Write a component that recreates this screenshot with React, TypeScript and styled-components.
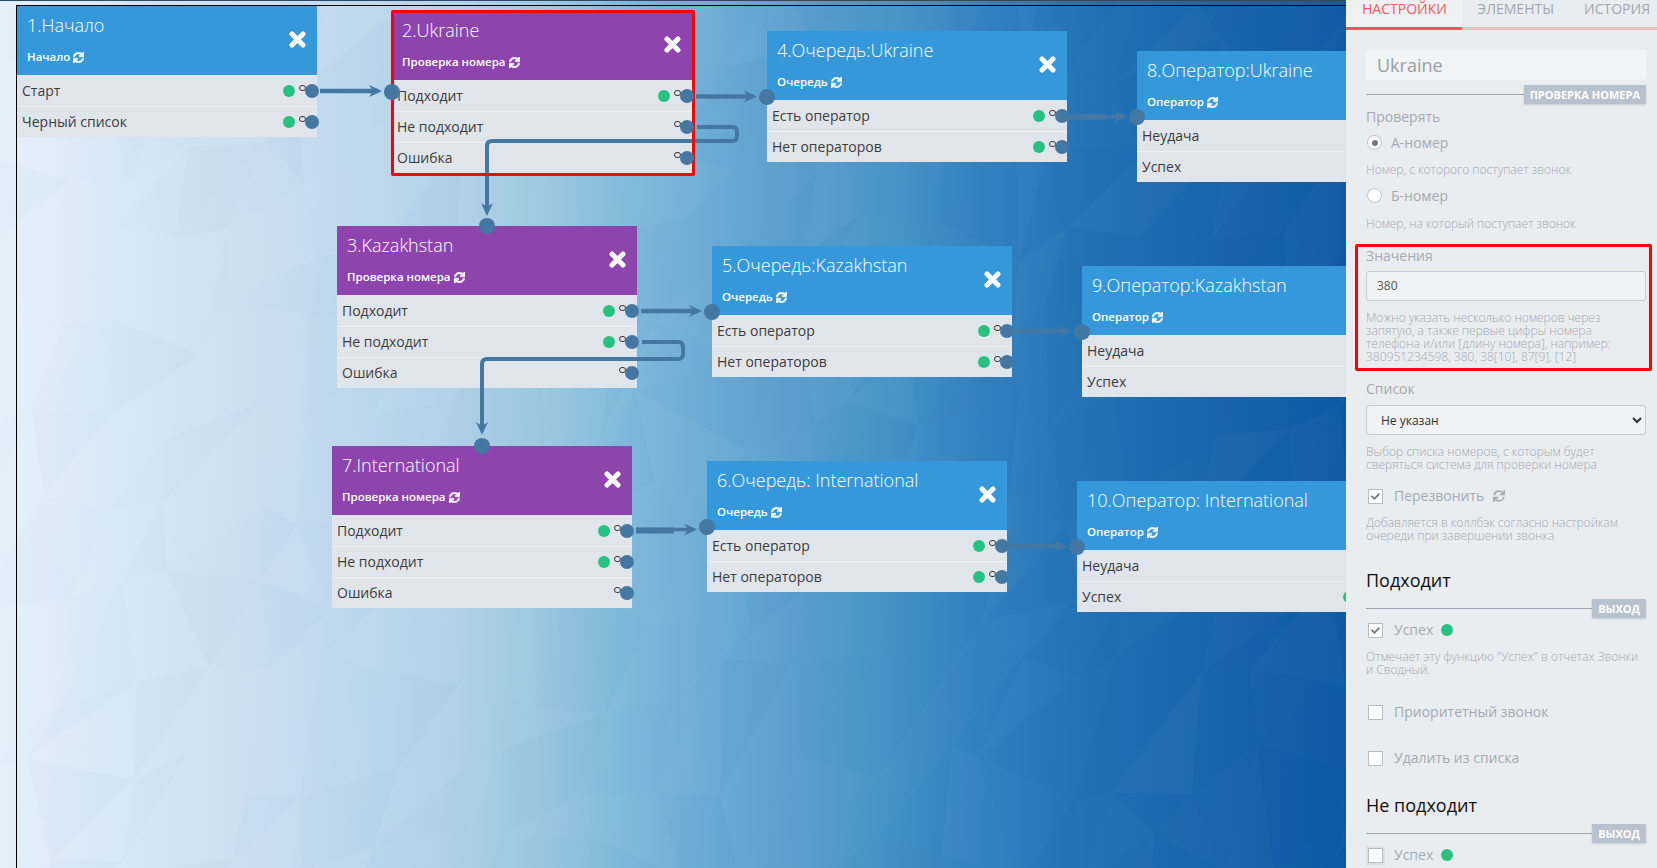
import React from "react";
import styled, { createGlobalStyle } from "styled-components";
import { FaCheck, FaSync } from "react-icons/fa";

const GlobalStyle = createGlobalStyle`
  html, body {
    margin: 0;
    padding: 0;
    height: 100%;
    overflow: hidden;
    font-family: "Open Sans", "Noto Sans", sans-serif;
  }
  * {
    box-sizing: border-box;
  }
`;

const Page = styled.div`
  display: flex;
  width: 1657px;
  height: 868px;
  overflow: hidden;
`;

const Canvas = styled.div`
  position: relative;
  flex: 1;
  overflow: hidden;
  background: linear-gradient(
    91deg,
    #e6f0fa 0,
    #d6e6f4 150px,
    #c6dcef 300px,
    #b4d3e9 450px,
    #9bc8e0 550px,
    #7fb8da 640px,
    #5a9fce 800px,
    #4593c8 900px,
    #3180bf 1000px,
    #2271b5 1100px,
    #1863ab 1250px,
    #0f5aa5 1346px
  );
`;

const Texture = styled.svg`
  position: absolute;
  inset: 0;
`;

const TopEdge = styled.div`
  position: absolute;
  inset: 0 0 auto 0;
  height: 1px;
  background: #2b4a68;
`;

const Frame = styled.div`
  position: absolute;
  left: 16px;
  top: 5px;
  right: 0;
  bottom: 0;
  border-left: 1px solid #000;
  border-top: 1px solid #000;
`;

const Node = styled.div<{ $left: number; $top: number }>`
  position: absolute;
  left: ${(p) => p.$left}px;
  top: ${(p) => p.$top}px;
  width: 300px;
`;

const Header = styled.div<{ $purple?: boolean }>`
  position: relative;
  height: 69px;
  padding: 7px 10px 0;
  color: #fff;
  background: ${(p) => (p.$purple ? "#8e44ad" : "#3498db")};
`;

const Title = styled.div`
  font-size: 18px;
  font-weight: 300;
  line-height: 25px;
  white-space: nowrap;
`;

const Sub = styled.div`
  display: flex;
  align-items: center;
  gap: 3px;
  margin-top: 11px;
  font-size: 11.5px;
  font-weight: 600;
  line-height: 16px;
`;

const SubIcon = styled(FaSync)`
  width: 11px;
  height: 11px;
  stroke: currentColor;
  stroke-width: 24px;
`;

const Close = styled.svg`
  position: absolute;
  right: 11px;
  top: 24.5px;
  width: 17px;
  height: 17px;
`;

const Row = styled.div`
  position: relative;
  display: flex;
  align-items: center;
  height: 31px;
  padding-left: 5px;
  font-size: 14px;
  color: #3c3c3c;
  background: #e0e5ec;
  & + & {
    box-shadow: inset 0 1px 0 #edf0f3;
  }
`;

const GreenDot = styled.span`
  position: absolute;
  left: 266px;
  top: 9.5px;
  width: 12px;
  height: 12px;
  border-radius: 50%;
  background: #26c281;
`;

const LinkRing = styled.span`
  position: absolute;
  left: 282.3px;
  top: 9.5px;
  width: 6.5px;
  height: 6.5px;
  border-radius: 50%;
  border: 1.5px solid #3b3433;
`;

const OutPort = styled.span`
  position: absolute;
  left: 288px;
  top: 8.5px;
  width: 14px;
  height: 14px;
  border-radius: 50%;
  background: #4478a3;
  z-index: 5;
`;

const InPort = styled.span<{ $x: number; $y: number }>`
  position: absolute;
  left: ${(p) => p.$x - 8}px;
  top: ${(p) => p.$y - 8}px;
  width: 16px;
  height: 16px;
  border-radius: 50%;
  background: #4478a3;
  z-index: 5;
`;

const Wires = styled.svg`
  position: absolute;
  inset: 0;
  z-index: 3;
  pointer-events: none;
`;

const RedMark = styled.div`
  position: absolute;
  left: 391px;
  top: 10px;
  width: 304px;
  height: 166px;
  border: 3px solid #f00;
  border-radius: 2px;
  z-index: 4;
`;

const Sidebar = styled.aside`
  flex: 0 0 311px;
  height: 868px;
  overflow: hidden;
  background: #e9edf0;
`;

const Tabs = styled.div`
  display: flex;
  height: 30px;
  white-space: nowrap;
  border-bottom: 3px solid #ecbfc1;
`;

const Tab = styled.div<{ $active?: boolean }>`
  flex: none;
  height: 30px;
  padding: ${(p) => (p.$active ? "0 15.5px 0 16px" : "0 15px")};
  font-size: 14px;
  line-height: 18px;
  color: ${(p) => (p.$active ? "#f05a65" : "#9ea7b1")};
  background: ${(p) => (p.$active ? "#eef0f1" : "transparent")};
  border-bottom: 3px solid ${(p) => (p.$active ? "#f4545f" : "transparent")};
`;

const Form = styled.div`
  padding: 0 11px 0 20px;
`;

const NameInput = styled.input`
  display: block;
  width: 100%;
  height: 30px;
  margin-top: 20px;
  padding: 0 11px;
  border: 0;
  border-radius: 3px;
  font: 18px "Open Sans", sans-serif;
  color: #9a9ea3;
  background: #f2f4f5;
`;

const Divider = styled.div<{ $mt: number }>`
  display: flex;
  align-items: center;
  height: 19px;
  margin-top: ${(p) => p.$mt}px;
  &::before {
    content: "";
    flex: 1;
    height: 1px;
    background: #9aa6b4;
  }
`;

const Badge = styled.span`
  padding: 0 6px;
  font-size: 11px;
  font-weight: 700;
  line-height: 19px;
  color: #fff;
  background: #b8c2ce;
  box-shadow: 0 1px 2px rgba(0, 0, 0, 0.15);
`;

const Label = styled.div<{ $mt: number }>`
  margin-top: ${(p) => p.$mt}px;
  font-size: 14px;
  line-height: 18px;
  color: #a4aab3;
`;

const Help = styled.div<{ $mt: number }>`
  margin-top: ${(p) => p.$mt}px;
  font-size: 12px;
  font-weight: 300;
  line-height: 13px;
  color: #a3a9b1;
`;

const OptionRow = styled.div<{ $mt: number }>`
  display: flex;
  align-items: center;
  height: 18px;
  margin-top: ${(p) => p.$mt}px;
  padding-left: 2px;
  font-size: 14px;
  color: #a4aab3;
`;

const Radio = styled.span<{ $on?: boolean }>`
  display: flex;
  align-items: center;
  justify-content: center;
  width: 13px;
  height: 13px;
  margin-right: 10px;
  border-radius: 50%;
  background: #fff;
  box-shadow: 0 0 0 1px #c4c7cb;
  &::after {
    content: "";
    width: 6px;
    height: 6px;
    border-radius: 50%;
    background: ${(p) => (p.$on ? "#777" : "transparent")};
  }
`;

const CheckBox = styled.span<{ $focus?: boolean }>`
  display: flex;
  flex: none;
  align-items: center;
  justify-content: center;
  width: 15px;
  height: 15px;
  margin: 2px 11px 0 0;
  color: #777;
  background: #fff;
  border: 1px solid #b9bdc2;
  box-shadow: ${(p) => (p.$focus ? "0 0 0 2px #dcdfe3" : "none")};
  svg {
    width: 9px;
    height: 9px;
  }
`;

const ReloadIcon = styled(FaSync)`
  width: 12px;
  height: 12px;
  margin-left: 9px;
  color: #a4aab3;
`;

const SuccessDot = styled.span`
  width: 12px;
  height: 12px;
  margin-left: 8px;
  border-radius: 50%;
  background: #26c281;
`;

const Heading = styled.div<{ $mt: number }>`
  margin-top: ${(p) => p.$mt}px;
  font-size: 18px;
  line-height: 24px;
  color: #111;
`;

const Highlight = styled.div`
  margin: 13.5px -6px 0 -11px;
  padding: 1px 3px 5.5px 8px;
  border: 3px solid #f00;
  border-radius: 2px;
`;

const FieldLabel = styled.div`
  font-size: 14px;
  line-height: 16px;
  color: #a4aab3;
`;

const ValueInput = styled.input`
  display: block;
  width: 100%;
  height: 30px;
  margin-top: 7px;
  padding: 0 10px;
  border: 1px solid #c5ccd6;
  border-radius: 3px;
  font: 12px "Open Sans", sans-serif;
  color: #555;
  background: #f0f2f4;
`;

const ListSelect = styled.select`
  display: block;
  width: 100%;
  height: 30px;
  margin-top: 7px;
  padding: 0 10px;
  border: 1px solid #c5ccd6;
  border-radius: 3px;
  font: 12px "Open Sans", sans-serif;
  color: #333;
  background: #f0f2f4;
`;

// low-poly backdrop: a jittered mesh of very faint triangles
const buildMesh = () => {
  let seed = 7;
  const rnd = () => {
    seed = (seed * 16807) % 2147483647;
    return seed / 2147483647;
  };
  const cols = 21;
  const rows = 11;
  const pts: [number, number][][] = [];
  for (let c = 0; c <= cols; c++) {
    pts[c] = [];
    for (let r = 0; r <= rows; r++) {
      pts[c][r] = [
        c * 68 - 20 + (rnd() - 0.5) * 50,
        r * 88 - 20 + (rnd() - 0.5) * 60,
      ];
    }
  }
  const tris: { d: string; fill: string; o: number }[] = [];
  const add = (a: number[], b: number[], d: number[]) => {
    tris.push({
      d: `${a.join(",")} ${b.join(",")} ${d.join(",")}`,
      fill: rnd() > 0.5 ? "#fff" : "#0a4f8f",
      o: 0.004 + rnd() * 0.018,
    });
  };
  for (let c = 0; c < cols; c++) {
    for (let r = 0; r < rows; r++) {
      add(pts[c][r], pts[c + 1][r], pts[c][r + 1]);
      add(pts[c + 1][r], pts[c + 1][r + 1], pts[c][r + 1]);
    }
  }
  return tris;
};

const mesh = buildMesh();

type RowData = { label: string; green?: boolean };
type NodeData = {
  left: number;
  top: number;
  title: string;
  sub: string;
  purple?: boolean;
  port?: [number, number];
  rows: RowData[];
};

const checkRows: RowData[] = [
  { label: "Подходит", green: true },
  { label: "Не подходит", green: true },
  { label: "Ошибка" },
];
const queueRows: RowData[] = [
  { label: "Есть оператор", green: true },
  { label: "Нет операторов", green: true },
];
const operatorRows: RowData[] = [
  { label: "Неудача" },
  { label: "Успех", green: true },
];

const nodes: NodeData[] = [
  {
    left: 17,
    top: 6,
    title: "1.Начало",
    sub: "Начало",
    rows: [
      { label: "Старт", green: true },
      { label: "Черный список", green: true },
    ],
  },
  {
    left: 392,
    top: 11,
    title: "2.Ukraine",
    sub: "Проверка номера",
    purple: true,
    port: [0, 81],
    rows: [
      { label: "Подходит", green: true },
      { label: "Не подходит" },
      { label: "Ошибка" },
    ],
  },
  {
    left: 337,
    top: 226,
    title: "3.Kazakhstan",
    sub: "Проверка номера",
    purple: true,
    port: [150, 0],
    rows: checkRows,
  },
  {
    left: 332,
    top: 446,
    title: "7.International",
    sub: "Проверка номера",
    purple: true,
    port: [150, 0],
    rows: checkRows,
  },
  { left: 767, top: 31, title: "4.Очередь:Ukraine", sub: "Очередь", port: [0, 66], rows: queueRows },
  { left: 712, top: 246, title: "5.Очередь:Kazakhstan", sub: "Очередь", port: [0, 66], rows: queueRows },
  { left: 707, top: 461, title: "6.Очередь: International", sub: "Очередь", port: [0, 66], rows: queueRows },
  { left: 1137, top: 51, title: "8.Оператор:Ukraine", sub: "Оператор", port: [0, 66], rows: operatorRows },
  { left: 1082, top: 266, title: "9.Оператор:Kazakhstan", sub: "Оператор", port: [0, 66], rows: operatorRows },
  { left: 1077, top: 481, title: "10.Оператор: International", sub: "Оператор", port: [0, 66], rows: operatorRows },
];

const WIRE = "#4478a3";

const Arrow = ({ x, y, down }: { x: number; y: number; down?: boolean }) => (
  <path
    fill={WIRE}
    d={
      down
        ? `M${x} ${y} L${x - 6} ${y - 13} L${x} ${y - 9} L${x + 6} ${y - 13} Z`
        : `M${x} ${y} L${x - 13} ${y - 6} L${x - 9} ${y} L${x - 13} ${y + 6} Z`
    }
  />
);

const straight: [number, number, number, number][] = [
  [320, 382, 91, 4.5],
  [696, 757, 96.5, 4.5],
  [641, 702, 311, 4.5],
  [636, 697, 529.5, 3.5],
  [636, 678, 530.5, 6],
  [1068, 1127, 116.5, 3.5],
  [1068, 1110, 117, 5.5],
  [1012, 1072, 331, 4.5],
  [1005, 1067, 546, 4.5],
];

const WireLayer = () => (
  <Wires width="1346" height="868">
    {straight.map(([a, b, y, w]) => (
      <line key={`${a}-${y}`} x1={a} x2={b - 4} y1={y} y2={y} stroke={WIRE} strokeWidth={w} />
    ))}
    <Arrow x={382} y={91} />
    <Arrow x={757} y={96.5} />
    <Arrow x={702} y={311} />
    <Arrow x={697} y={529.5} />
    <Arrow x={1127} y={116.5} />
    <Arrow x={1072} y={331} />
    <Arrow x={1067} y={546} />
    <path
      d="M697 127 H732 Q737 127 737 132 V136 Q737 141 732 141 H492 Q487 141 487 146 V210"
      fill="none"
      stroke={WIRE}
      strokeWidth="4"
    />
    <Arrow x={487} y={216} down />
    <path
      d="M642 342 H678 Q683 342 683 347 V354 Q683 359 678 359 H487 Q482 359 482 364 V429"
      fill="none"
      stroke={WIRE}
      strokeWidth="4"
    />
    <Arrow x={482} y={435} down />
  </Wires>
);

const FlowNode = ({ data }: { data: NodeData }) => (
  <Node $left={data.left} $top={data.top}>
    <Header $purple={data.purple}>
      <Title>{data.title}</Title>
      <Sub>
        {data.sub}
        <SubIcon />
      </Sub>
      <Close viewBox="0 0 17 17">
        <path
          d="M3 3 L14 14 M14 3 L3 14"
          stroke="#fff"
          strokeWidth="5"
          strokeLinecap="round"
        />
      </Close>
    </Header>
    {data.port && <InPort $x={data.port[0]} $y={data.port[1]} />}
    {data.rows.map((row) => (
      <Row key={row.label}>
        {row.label}
        {row.green && <GreenDot />}
        <LinkRing />
        <OutPort />
      </Row>
    ))}
  </Node>
);

const App = () => {
  return (
    <Page>
      <GlobalStyle />
      <Canvas>
        <Texture width="1346" height="868">
          {mesh.map((t, i) => (
            <polygon key={i} points={t.d} fill={t.fill} fillOpacity={t.o} />
          ))}
        </Texture>
        <TopEdge />
        <Frame />
        {nodes.map((n) => (
          <FlowNode key={n.title} data={n} />
        ))}
        <WireLayer />
        <RedMark />
      </Canvas>
      <Sidebar>
        <Tabs>
          <Tab $active>НАСТРОЙКИ</Tab>
          <Tab>ЭЛЕМЕНТЫ</Tab>
          <Tab>ИСТОРИЯ</Tab>
        </Tabs>
        <Form>
          <NameInput readOnly value="Ukraine" />
          <Divider $mt={5}>
            <Badge>ПРОВЕРКА НОМЕРА</Badge>
          </Divider>
          <Label $mt={4}>Проверять</Label>
          <OptionRow $mt={7.5}>
            <Radio $on />А-номер
          </OptionRow>
          <Help $mt={11.5}>Номер, с которого поступает звонок</Help>
          <OptionRow $mt={10.5}>
            <Radio />Б-номер
          </OptionRow>
          <Help $mt={12.5}>Номер, на который поступает звонок</Help>
          <Highlight>
            <FieldLabel>Значения</FieldLabel>
            <ValueInput readOnly value="380" />
            <Help $mt={10}>
              Можно указать несколько номеров через запятую, а также первые цифры номера
              телефона и/или [длину номера], например: 380951234598, 380, 38[10], 87[9], [12]
            </Help>
          </Highlight>
          <Label $mt={9}>Список</Label>
          <ListSelect defaultValue="none">
            <option value="none">Не указан</option>
          </ListSelect>
          <Help $mt={10}>
            Выбор списка номеров, с которым будет сверяться система для проверки номера
          </Help>
          <OptionRow $mt={15.5}>
            <CheckBox>
              <FaCheck />
            </CheckBox>
            Перезвонить
            <ReloadIcon />
          </OptionRow>
          <Help $mt={11.5}>
            Добавляется в коллбэк согласно настройкам очереди при завершении звонка
          </Help>
          <Heading $mt={25.5}>Подходит</Heading>
          <Divider $mt={7}>
            <Badge>ВЫХОД</Badge>
          </Divider>
          <OptionRow $mt={3}>
            <CheckBox>
              <FaCheck />
            </CheckBox>
            Успех
            <SuccessDot />
          </OptionRow>
          <Help $mt={11.5}>
            Отмечает эту функцию "Успех" в отчетах Звонки и Сводный.
          </Help>
          <OptionRow $mt={26.5}>
            <CheckBox />
            Приоритетный звонок
          </OptionRow>
          <OptionRow $mt={28}>
            <CheckBox />
            Удалить из списка
          </OptionRow>
          <Heading $mt={26}>Не подходит</Heading>
          <Divider $mt={7}>
            <Badge>ВЫХОД</Badge>
          </Divider>
          <OptionRow $mt={3}>
            <CheckBox $focus />
            Успех
            <SuccessDot />
          </OptionRow>
        </Form>
      </Sidebar>
    </Page>
  );
};

export default App;
